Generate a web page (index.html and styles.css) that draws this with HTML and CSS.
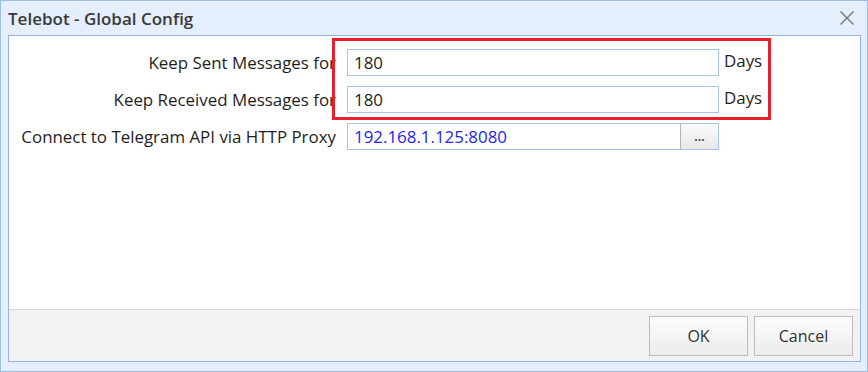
FILE: index.html
```html
<!DOCTYPE html>
<html lang="en">

<head>
    <meta charset="UTF-8">
    <meta name="viewport" content="width=device-width, initial-scale=1.0">
    <title>Telebot - Global Config</title>
    <link rel="stylesheet" href="styles.css">
</head>

<body>
    <div class="window">
        <div class="titlebar">
            <span class="title">Telebot - Global Config</span>
            <span class="close">
                <svg width="16" height="16" viewBox="0 0 16 16">
                    <path d="M1.5 1.5 L14.5 14.5 M14.5 1.5 L1.5 14.5" stroke="#707070" stroke-width="1.3" fill="none" />
                </svg>
            </span>
        </div>
        <div class="panel">
            <div class="content">
                <div class="form">
                    <label class="label">Keep Sent Messages for</label>
                    <div class="field"><span class="value">180</span></div>
                    <span class="unit">Days</span>

                    <label class="label">Keep Received Messages for</label>
                    <div class="field"><span class="value">180</span></div>
                    <span class="unit">Days</span>

                    <label class="label">Connect to Telegram API via HTTP Proxy</label>
                    <div class="field">
                        <span class="value link">192.168.1.125:8080</span>
                        <span class="browse">...</span>
                    </div>
                    <span class="unit"></span>
                </div>
                <!-- 강조 표시 -->
                <div class="highlight"></div>
            </div>
            <div class="footer">
                <button class="btn">OK</button>
                <button class="btn">Cancel</button>
            </div>
        </div>
    </div>
</body>

</html>
```
FILE: styles.css
```css
* {
    margin: 0;
    padding: 0;
    box-sizing: border-box;
}

body {
    width: 868px;
    height: 372px;
    font-family: "Open Sans", "Noto Sans", sans-serif;
    font-size: 16.9px;
    color: #1e1e1e;
}

.window {
    width: 868px;
    height: 372px;
    display: flex;
    flex-direction: column;
    border: 1px solid #9dbce9;
    background-color: #e4eefd;
}

.titlebar {
    height: 34px;
    display: flex;
    align-items: center;
    justify-content: space-between;
    padding: 0 12px 0 7px;
}

.title {
    font-size: 17px;
    font-weight: 600;
    color: #3a3a3a;
}

.close {
    display: flex;
}

.panel {
    flex: 1;
    display: flex;
    flex-direction: column;
    margin: 0 6px 9px 7px;
    border: 1px solid #93b5e8;
}

.content {
    flex: 1;
    position: relative;
    background-color: #fff;
    padding: 13px 0 0 0;
}

.form {
    display: grid;
    grid-template-columns: 338px 372px max-content;
    grid-auto-rows: 27px;
    row-gap: 10px;
    align-items: center;
}

.label {
    text-align: right;
    white-space: nowrap;
    padding-right: 11px;
}

.field {
    height: 27px;
    display: flex;
    align-items: center;
    border: 1px solid #a6c3ea;
}

.value {
    flex: 1;
    padding-left: 6px;
}

.value.link {
    color: #2323f0;
}

.browse {
    width: 38px;
    height: 100%;
    display: flex;
    justify-content: center;
    align-items: center;
    border-left: 1px solid #b4b4b4;
    background: linear-gradient(#fbfbfb, #e8e8e8);
    font-size: 12px;
    font-weight: 700;
    color: #444;
}

.unit {
    padding-left: 5px;
    padding-bottom: 4px;
}

.highlight {
    position: absolute;
    left: 323px;
    top: 2px;
    width: 439px;
    height: 82px;
    border: 3px solid #e8202b;
    pointer-events: none;
}

.footer {
    height: 52px;
    display: flex;
    justify-content: flex-end;
    align-items: center;
    gap: 6px;
    padding-right: 7px;
    border-top: 1px solid #d6d6d6;
    background-color: #f2f2f2;
}

.btn {
    width: 99px;
    height: 40px;
    border: 1px solid #bdbdbd;
    background: linear-gradient(#fdfdfd, #ececec);
    font-family: inherit;
    font-size: 16px;
    color: #333;
}
```
